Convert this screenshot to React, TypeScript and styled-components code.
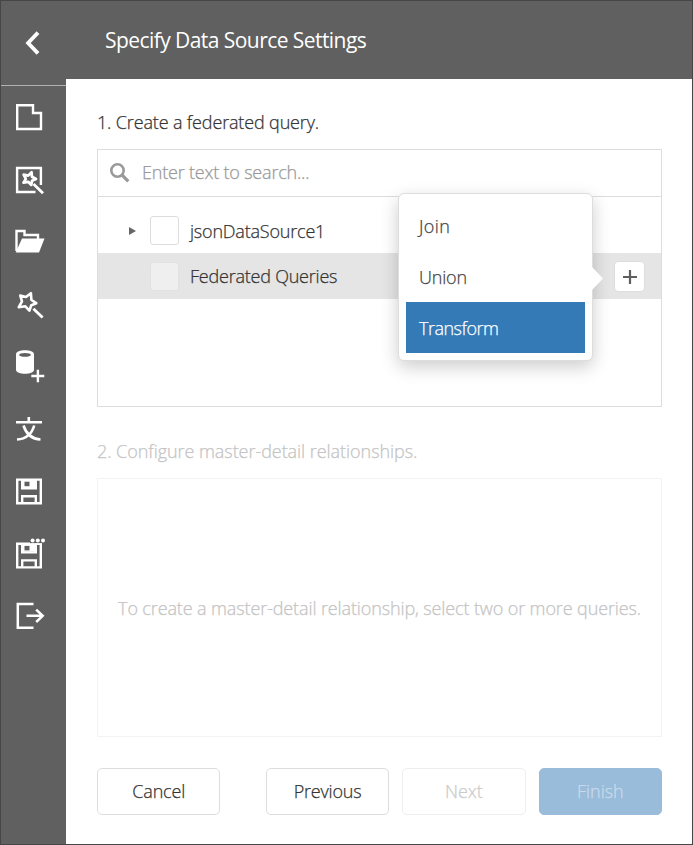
import React from "react";
import styled, { createGlobalStyle } from "styled-components";

const GlobalStyle = createGlobalStyle`
  *, *::before, *::after { box-sizing: border-box; }
  body { margin: 0; background: #fff; }
  button { font: inherit; color: inherit; margin: 0; }
`;

const Window = styled.div`
  display: flex;
  width: 693px;
  height: 845px;
  border: 1px solid #464646;
  background: #fff;
  color: #333;
  font-family: "Open Sans", "Noto Sans", sans-serif;
  font-size: 18px;
  font-weight: 300;
  line-height: 24px;
  -webkit-text-stroke: 0.25px currentColor;
`;

const Label = styled.span<{ $tracking?: number }>`
  letter-spacing: ${(p) => p.$tracking ?? -0.2}px;
  white-space: nowrap;
`;

const Sidebar = styled.nav`
  display: flex;
  flex-direction: column;
  flex: none;
  width: 65px;
  background: #606060;
`;

const BackButton = styled.button`
  display: flex;
  align-items: center;
  height: 85px;
  padding: 0 0 1px 22px;
  border: 0;
  border-bottom: 1px solid #b0b0b0;
  background: none;
`;

const ToolList = styled.div`
  display: flex;
  flex-direction: column;
`;

const ToolButton = styled.button`
  display: flex;
  align-items: center;
  height: 62.4px;
  padding: 0 0 0 12px;
  border: 0;
  background: none;
`;

const Icon = styled.svg`
  display: block;
  flex: none;
  fill: none;
  stroke: #fff;
`;

const Main = styled.main`
  display: flex;
  flex-direction: column;
  flex: 1;
`;

const Header = styled.header`
  display: flex;
  align-items: center;
  height: 78px;
  padding: 0 0 0 39px;
  background: #606060;
  color: #fff;
  font-size: 21px;
  font-weight: 400;
  -webkit-text-stroke: 0;
`;

const Content = styled.div`
  display: flex;
  flex-direction: column;
  padding: 31px 30px 0 31px;
`;

const StepTitle = styled.h2<{ $disabled?: boolean }>`
  margin: 0;
  height: 39px;
  font-size: 18px;
  font-weight: inherit;
  color: ${(p) => (p.$disabled ? "#c4c4c4" : "inherit")};
`;

const QueryPanel = styled.section`
  height: 258px;
  margin-bottom: 32px;
  border: 1px solid #ddd;
`;

const SearchBar = styled.div`
  display: flex;
  align-items: center;
  gap: 12px;
  height: 47px;
  padding: 0 0 1px 12px;
  border-bottom: 1px solid #ddd;
  color: #999;
`;

const Placeholder = styled(Label)`
  padding-bottom: 2px;
`;

const Tree = styled.div`
  padding-top: 10px;
`;

const TreeRow = styled.div<{ $selected?: boolean }>`
  position: relative;
  display: flex;
  align-items: center;
  height: 46px;
  padding: 0 16px 0 30px;
  background: ${(p) => (p.$selected ? "#e5e5e5" : "transparent")};
`;

const ArrowSlot = styled.span`
  display: flex;
  width: 22px;
  padding-top: 2px;
`;

const Checkbox = styled.span<{ $disabled?: boolean }>`
  width: 29px;
  height: 29px;
  margin-right: 11px;
  border: 1px solid ${(p) => (p.$disabled ? "#e2e2e2" : "#ddd")};
  border-radius: 3px;
  background: ${(p) => (p.$disabled ? "#efefef" : "#fff")};
`;

const NodeName = styled(Label)<{ $drop?: number }>`
  padding-top: ${(p) => p.$drop ?? 0}px;
`;

const AddButton = styled.button`
  display: flex;
  align-items: center;
  justify-content: center;
  width: 31px;
  height: 31px;
  margin-left: auto;
  padding: 2px 0 0;
  border: 1px solid #ddd;
  border-radius: 4px;
  background: #fff;
`;

const Popup = styled.div`
  position: absolute;
  top: -60px;
  right: 68px;
  width: 195px;
  height: 168px;
  padding: 6px 7px;
  border: 1px solid #ddd;
  border-radius: 6px;
  background: #fff;
  box-shadow: 0 6px 18px rgba(0, 0, 0, 0.2);
`;

const PopupArrow = styled.svg`
  position: absolute;
  top: 73px;
  left: 193px;
`;

const PopupItem = styled.div<{ $active?: boolean }>`
  display: flex;
  align-items: center;
  height: 51px;
  padding-left: 13px;
  color: ${(p) => (p.$active ? "#fff" : "#444")};
  background: ${(p) => (p.$active ? "#337ab7" : "transparent")};
`;

const RelationPanel = styled.section`
  display: flex;
  align-items: center;
  justify-content: center;
  height: 259px;
  margin-bottom: 31px;
  border: 1px solid #f3f3f3;
  color: #c4c4c4;
`;

const Footer = styled.footer`
  display: flex;
  justify-content: space-between;
`;

const FooterGroup = styled.div`
  display: flex;
  gap: 13px;
`;

const tones = {
  normal: { border: "#ddd", background: "#fff", color: "#333" },
  muted: { border: "#eee", background: "#fff", color: "#cacaca" },
  primary: { border: "#99bcdb", background: "#99bcdb", color: "#c9dbeb" },
};

const ActionButton = styled.button<{ $tone?: keyof typeof tones }>`
  width: 123.4px;
  height: 47px;
  padding: 0 0 2px;
  border: 1px solid ${(p) => tones[p.$tone ?? "normal"].border};
  border-radius: 5px;
  background: ${(p) => tones[p.$tone ?? "normal"].background};
  color: ${(p) => tones[p.$tone ?? "normal"].color};
`;

const floppy = (
  <>
    <path d="M4.2 5.2H27.8V28.8H4.2Z" strokeWidth="2.4" />
    <path d="M9.2 5V13.8H22.8V5" strokeWidth="2.4" />
    <path d="M10 5H23V13H10Z" fill="#fff" stroke="none" />
    <path d="M11.5 7.3H16.5V11.8H11.5Z" fill="#606060" stroke="none" />
    <path d="M9.2 29V21.8H22.8V29" strokeWidth="2.4" />
  </>
);

const tools: { name: string; drawing: React.ReactNode }[] = [
  { name: "New", drawing: <path d="M4.2 4.2H20V12H28V28H4.2Z" strokeWidth="2.4" /> },
  {
    name: "New via wizard",
    drawing: (
      <>
        <path d="M27.9 21V4H4.1V28H22.5" strokeWidth="2.4" />
        <path d="M18.6 8.2L19 12.8L23 15L19 16.8L18.3 21L15.2 17.8L10.5 18.7L12.8 14.9L10.6 10.6L15.2 11.6Z" strokeWidth="2.7" strokeLinejoin="round" />
        <path d="M20.5 20L30 29.2" strokeWidth="2.8" />
      </>
    ),
  },
  {
    name: "Open",
    drawing: (
      <>
        <path d="M3.5 25V5H11.5V9H25V13" strokeWidth="2.4" />
        <path d="M9 12.5H31.5L26 26.5H2.7Z" fill="#fff" stroke="none" />
      </>
    ),
  },
  {
    name: "Design in wizard",
    drawing: (
      <g transform="translate(-.9 0)">
        <path d="M18.8 5.2L19.3 12L24.2 15.2L19.2 17.2L17.3 22.6L13.3 18.3L6.7 19.2L9.9 13.4L8.2 7.6L13.8 9Z" strokeWidth="2.6" strokeLinejoin="round" />
        <path d="M21.3 20.8L30.5 29.6" strokeWidth="2.8" />
      </g>
    ),
  },
  {
    name: "Add data source",
    drawing: (
      <g transform="translate(-1 -4)">
        <path d="M4 7.3C4 1.9 22 1.9 22 7.3V22.7C22 28.1 4 28.1 4 22.7Z" fill="#fff" stroke="none" />
        <ellipse cx="13" cy="7.9" rx="5.8" ry="1.9" fill="#606060" stroke="none" />
        <path d="M25.9 22.7V35.3M19.3 29H32.3" strokeWidth="2.4" />
      </g>
    ),
  },
  {
    name: "Localization",
    drawing: (
      <path transform="translate(-1 0)" d="M16.8 4V9M4 9.3H30M11.5 12.5C13.5 19 17.5 25.8 28.5 26.5M22.2 12.5C20.4 19 15.5 25.8 5 26.5" strokeWidth="2.6" />
    ),
  },
  { name: "Save", drawing: <g transform="translate(0 -1.6)">{floppy}</g> },
  {
    name: "Save as",
    drawing: (
      <g transform="translate(0 .6)">
        {floppy}
        <path d="M17 0H32V4.5H17Z" fill="#606060" stroke="none" />
        <g fill="#fff" stroke="none">
          <circle cx="19.6" cy="1.9" r="2" />
          <circle cx="24.8" cy="1.9" r="2" />
          <circle cx="30" cy="1.9" r="2" />
        </g>
      </g>
    ),
  },
  {
    name: "Exit",
    drawing: (
      <path transform="translate(-.5 0)" d="M21 3.9H5.3V27.8H21M14 15.8H30M23.7 9.6L30.2 15.8L23.7 22" strokeWidth="2.5" />
    ),
  },
];

export default function App() {
  return (
    <>
      <GlobalStyle />
      <Window>
        <Sidebar>
          <BackButton aria-label="Back">
            <Icon width="18" height="24" viewBox="0 0 18 24">
              <path d="M15 1.6L5.1 12L15 22.4" strokeWidth="3.8" />
            </Icon>
          </BackButton>
          <ToolList>
            {tools.map((tool) => (
              <ToolButton key={tool.name} aria-label={tool.name}>
                <Icon width="32" height="32" viewBox="0 0 32 32" overflow="visible">
                  {tool.drawing}
                </Icon>
              </ToolButton>
            ))}
          </ToolList>
        </Sidebar>
        <Main>
          <Header>
            <Label $tracking={-0.56}>Specify Data Source Settings</Label>
          </Header>
          <Content>
            <StepTitle>
              <Label $tracking={-0.15}>1. Create a federated query.</Label>
            </StepTitle>
            <QueryPanel>
              <SearchBar>
                <Icon width="20" height="20" viewBox="0 0 20 20">
                  <circle cx="7.5" cy="7.5" r="6.2" stroke="#999" strokeWidth="2.6" />
                  <path d="M12 12L18.3 18.3" stroke="#999" strokeWidth="3.2" />
                </Icon>
                <Placeholder>Enter text to search...</Placeholder>
              </SearchBar>
              <Tree>
                <TreeRow>
                  <ArrowSlot>
                    <Icon width="8" height="10" viewBox="0 0 8 10">
                      <path d="M1 1L8 5L1 9Z" fill="#666" stroke="none" />
                    </Icon>
                  </ArrowSlot>
                  <Checkbox />
                  <NodeName $drop={2}>jsonDataSource1</NodeName>
                </TreeRow>
                <TreeRow $selected>
                  <ArrowSlot />
                  <Checkbox $disabled />
                  <NodeName $tracking={-0.22}>Federated Queries</NodeName>
                  <AddButton aria-label="Add query">
                    <Icon width="14" height="14" viewBox="0 0 14 14">
                      <path d="M7 0V14M0 7H14" stroke="#5f5f5f" strokeWidth="2.2" />
                    </Icon>
                  </AddButton>
                  <Popup>
                    <PopupItem>
                      <Label $tracking={0.4}>Join</Label>
                    </PopupItem>
                    <PopupItem>
                      <Label>Union</Label>
                    </PopupItem>
                    <PopupItem $active>
                      <Label $tracking={-0.5}>Transform</Label>
                    </PopupItem>
                    <PopupArrow width="12" height="23" viewBox="0 0 12 23">
                      <path d="M0 0L11 11.5L0 23Z" fill="#fff" />
                    </PopupArrow>
                  </Popup>
                </TreeRow>
              </Tree>
            </QueryPanel>
            <StepTitle $disabled>
              <Label $tracking={-0.05}>2. Configure master-detail relationships.</Label>
            </StepTitle>
            <RelationPanel>
              <Label $tracking={-0.12}>To create a master-detail relationship, select two or more queries.</Label>
            </RelationPanel>
            <Footer>
              <ActionButton>
                <Label>Cancel</Label>
              </ActionButton>
              <FooterGroup>
                <ActionButton>
                  <Label>Previous</Label>
                </ActionButton>
                <ActionButton $tone="muted" disabled>
                  <Label $tracking={0}>Next</Label>
                </ActionButton>
                <ActionButton $tone="primary" disabled>
                  <Label $tracking={0}>Finish</Label>
                </ActionButton>
              </FooterGroup>
            </Footer>
          </Content>
        </Main>
      </Window>
    </>
  );
}
